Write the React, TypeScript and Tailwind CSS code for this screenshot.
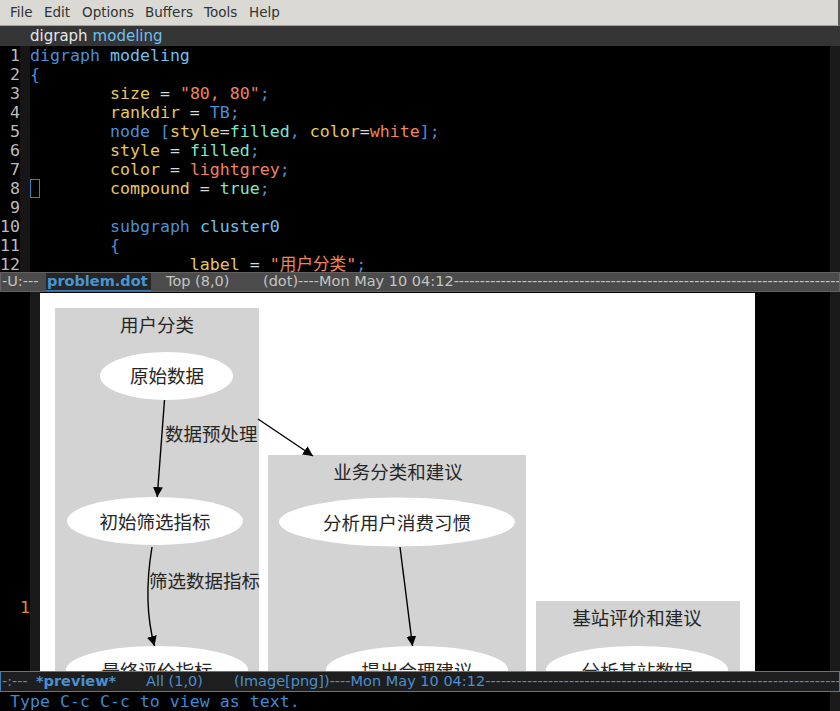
import React from "react";

const mono = { fontFamily: '"DejaVu Sans Mono", "Noto Sans CJK SC", monospace' };
const sans = { fontFamily: '"DejaVu Sans", "Noto Sans", sans-serif' };
const cjk = '"Noto Sans CJK SC", "Noto Sans", sans-serif';

const K = "text-[#4b8fd6]"; // keyword blue
const L = "text-[#70c0ec]"; // light blue
const Y = "text-[#e6c860]"; // attr yellow
const S = "text-[#f0845c]"; // string orange
const A = "text-[#7fe6c6]"; // aquamarine
const W = "text-[#d8d8d8]"; // operator

type Seg = [string, string];
const lines: Seg[][] = [
  [[K, "digraph"], [W, " "], [L, "modeling"]],
  [[K, "{"]],
  [[W, "        "], [Y, "size"], [W, " = "], [S, '"80, 80"'], [K, ";"]],
  [[W, "        "], [Y, "rankdir"], [W, " = "], [K, "TB"], [K, ";"]],
  [[W, "        "], [K, "node"], [W, " "], [K, "["], [Y, "style"], [W, "="], [A, "filled"], [K, ","], [W, " "], [Y, "color"], [W, "="], [S, "white"], [K, "];"]],
  [[W, "        "], [Y, "style"], [W, " = "], [A, "filled"], [K, ";"]],
  [[W, "        "], [Y, "color"], [W, " = "], [S, "lightgrey"], [K, ";"]],
  [[W, "        "], [Y, "compound"], [W, " = "], [A, "true"], [K, ";"]],
  [[W, " "]],
  [[W, "        "], [K, "subgraph"], [W, " "], [L, "cluster0"]],
  [[W, "        "], [K, "{"]],
  [[W, "                "], [Y, "label"], [W, " = "], [S, '"用户分类"'], [K, ";"]],
];

function Graph() {
  const t = { fontFamily: cjk, fontSize: 18.5, fill: "#262626" } as React.CSSProperties;
  return (
    <svg width="715" height="379" viewBox="0 0 715 379" className="block bg-white">
      <defs>
        <marker id="ah" viewBox="0 0 10 10" refX="10" refY="5" markerWidth="10" markerHeight="10" markerUnits="userSpaceOnUse" orient="auto">
          <path d="M0,0 L10,5 L0,10 z" fill="#000" />
        </marker>
      </defs>
      {/* clusters */}
      <rect x="15" y="15" width="204" height="400" fill="#d3d3d3" />
      <rect x="228" y="162" width="258" height="260" fill="#d3d3d3" />
      <rect x="496" y="308" width="204" height="100" fill="#d3d3d3" />
      <text x="117" y="31" textAnchor="middle" dominantBaseline="central" style={t}>用户分类</text>
      <text x="358" y="178" textAnchor="middle" dominantBaseline="central" style={t}>业务分类和建议</text>
      <text x="597" y="324" textAnchor="middle" dominantBaseline="central" style={t}>基站评价和建议</text>

      {/* nodes */}
      <ellipse cx="126.5" cy="83" rx="66.5" ry="24" fill="#fff" />
      <text x="127" y="82" textAnchor="middle" dominantBaseline="central" style={t}>原始数据</text>
      <ellipse cx="115" cy="228" rx="88" ry="24" fill="#fff" />
      <text x="115" y="228" textAnchor="middle" dominantBaseline="central" style={t}>初始筛选指标</text>
      <ellipse cx="117" cy="377" rx="91" ry="24" fill="#fff" />
      <text x="117" y="377" textAnchor="middle" dominantBaseline="central" style={t}>最终评价指标</text>
      <ellipse cx="357" cy="229" rx="118" ry="24.5" fill="#fff" />
      <text x="357" y="229" textAnchor="middle" dominantBaseline="central" style={t}>分析用户消费习惯</text>
      <ellipse cx="377" cy="377" rx="91" ry="24" fill="#fff" />
      <text x="377" y="377" textAnchor="middle" dominantBaseline="central" style={t}>提出合理建议</text>
      <ellipse cx="597" cy="377" rx="91" ry="24" fill="#fff" />
      <text x="597" y="377" textAnchor="middle" dominantBaseline="central" style={t}>分析基站数据</text>

      {/* edges */}
      <path d="M124.5,107 L117.2,204" stroke="#000" strokeWidth="1.4" fill="none" markerEnd="url(#ah)" />
      <text x="125" y="140" dominantBaseline="central" style={t}>数据预处理</text>
      <path d="M112,254 C106,290 106,322 114.5,353" stroke="#000" strokeWidth="1.4" fill="none" markerEnd="url(#ah)" />
      <text x="109" y="287" dominantBaseline="central" style={t}>筛选数据指标</text>
      <path d="M218,126 L273,163" stroke="#000" strokeWidth="1.4" fill="none" markerEnd="url(#ah)" />
      <path d="M360,254 L372.5,353" stroke="#000" strokeWidth="1.4" fill="none" markerEnd="url(#ah)" />
    </svg>
  );
}

export default function App() {
  const dashes = "-".repeat(120);
  return (
    <div className="w-[840px] h-[711px] bg-black flex flex-col overflow-hidden">
      {/* menu bar */}
      <div className="h-[26px] shrink-0 bg-[#dad9d4] border-b border-[#a3a19a] border-r-2 border-r-[#5a5a58] flex items-center pl-[10px] text-[13.5px] text-[#2e3436]" style={sans}>
        <span className="w-[34px] shrink-0">File</span>
        <span className="w-[38px] shrink-0">Edit</span>
        <span className="w-[63px] shrink-0">Options</span>
        <span className="w-[59px] shrink-0">Buffers</span>
        <span className="w-[45px] shrink-0">Tools</span>
        <span className="shrink-0">Help</span>
      </div>
      {/* header line */}
      <div className="h-[20px] shrink-0 bg-[#353535] flex items-center pl-[30px] text-[15px] leading-none" style={sans}>
        <span className="text-[#e8e8e8]">digraph</span>
        <span className="text-[#70c0ec] ml-[5px]">modeling</span>
      </div>
      {/* code window */}
      <div className="h-[226px] shrink-0 flex overflow-hidden text-[16.6px] leading-[19px]" style={mono}>
        <div className="w-[20px] shrink-0 flex flex-col items-end text-[#bdbdbd]">
          {lines.map((_, i) => (
            <div key={i} className="h-[19px] shrink-0">{i + 1}</div>
          ))}
        </div>
        <div className="w-[10px] shrink-0 bg-[#161616]" />
        <div className="flex-1 flex flex-col relative">
          {lines.map((segs, i) => (
            <div key={i} className="h-[19px] shrink-0 whitespace-pre relative">
              {i === 7 && <span className="absolute left-0 top-0 w-[10px] h-[19px] border border-[#3a7fc0]" />}
              {segs.map(([c, s], j) => (
                <span key={j} className={c}>{s}</span>
              ))}
            </div>
          ))}
        </div>
        <div className="w-[10px] shrink-0 bg-[#1a1a1a]" />
      </div>
      {/* mode line 1 */}
      <div className="h-[20px] shrink-0 bg-[#4b4b4b] border border-[#626262] flex items-center whitespace-pre overflow-hidden text-[14.5px] text-[#c4c4c4]" style={sans}>
        <span className="w-[45px] shrink-0 pl-[1px]">-U:---</span>
        <span className="w-[105px] shrink-0 h-full flex items-center pl-[1px] bg-[#262626] border-b border-[#3d7ab5] font-bold text-[#4696d6]">problem.dot</span>
        <span className="w-[112px] shrink-0 pl-[15px]">Top (8,0)</span>
        <span className="shrink-0">(dot)----Mon May 10 04:12{dashes}</span>
      </div>
      {/* image window */}
      <div className="h-[379px] shrink-0 flex overflow-hidden">
        <div className="w-[30px] shrink-0 flex flex-col items-end pt-[306px] text-[16.6px] leading-[19px] text-[#e0883c]" style={mono}>1</div>
        <div className="w-[10px] shrink-0 bg-[#1a1a1a]" />
        <div className="w-[715px] shrink-0 pt-[1px] bg-black">
          <Graph />
        </div>
        <div className="flex-1" />
        <div className="w-[10px] shrink-0 bg-[#1a1a1a]" />
      </div>
      {/* mode line 2 */}
      <div className="h-[21px] shrink-0 bg-[#1e1e1e] border border-[#3f7db5] flex items-center whitespace-pre overflow-hidden text-[14.5px] text-[#4a8fd0]" style={sans}>
        <span className="w-[35px] shrink-0 pl-[1px]">-:---</span>
        <span className="w-[110px] shrink-0 font-bold">*preview*</span>
        <span className="w-[88px] shrink-0">All (1,0)</span>
        <span className="shrink-0">(Image[png])----Mon May 10 04:12{dashes}</span>
      </div>
      {/* minibuffer */}
      <div className="h-[19px] shrink-0 flex">
        <div className="flex-1 pl-[10px] text-[16.6px] leading-[19px] text-[#3d8ad0] whitespace-pre" style={mono}>Type C-c C-c to view as text.</div>
        <div className="w-[10px] shrink-0 bg-[#1a1a1a]" />
      </div>
    </div>
  );
}
